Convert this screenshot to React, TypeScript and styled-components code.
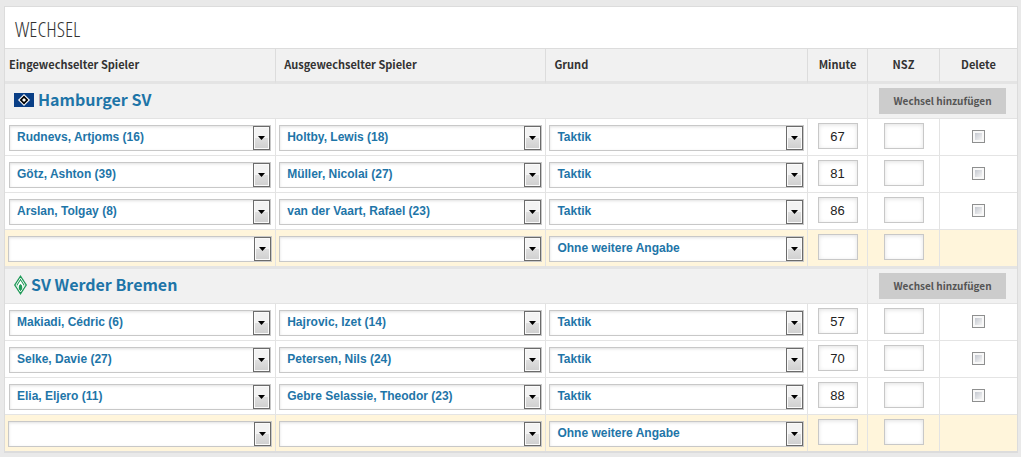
import React from "react";
import styled, { createGlobalStyle } from "styled-components";

const GlobalStyle = createGlobalStyle`
  *, *::before, *::after { box-sizing: border-box; }
  body {
    margin: 0;
    background: #e9e9e9;
    color: #333;
    font-family: "Noto Sans CJK JP", "Noto Sans", sans-serif;
    font-size: 11px;
  }
`;

const Panel = styled.section`
  margin: 6px 3px 4px 4px;
  background: #fff;
  border: 1px solid #dcdcdc;
  border-bottom-width: 2px;
`;

const Title = styled.h2`
  margin: 0;
  padding: 2px 10px 0;
  height: 42px;
  line-height: 40px;
  border-bottom: 1px solid #dcdcdc;
  font-family: "Open Sans Condensed Light", "Open Sans Condensed", "Open Sans", sans-serif;
  font-weight: 300;
  font-size: 21px;
  text-transform: uppercase;
`;

const Table = styled.table`
  width: 100%;
  table-layout: fixed;
  border-collapse: separate;
  border-spacing: 0;
`;

const Col = styled.col<{ $width?: string }>`
  width: ${(p) => p.$width ?? "auto"};
`;

const HeadCell = styled.th<{ $inset?: number; $center?: boolean }>`
  height: 35px;
  padding: 0 4px 2px ${(p) => p.$inset ?? 4}px;
  background: #f1f1f1;
  border-right: 1px solid #dcdcdc;
  border-bottom: 3px solid #e4e4e4;
  font-weight: 700;
  line-height: 16px;
  text-align: ${(p) => (p.$center ? "center" : "left")};
  &:last-child { border-right: 0; }
`;

const TeamCell = styled.th`
  height: 35px;
  padding: 0 9px 2px;
  background: #f1f1f1;
  border-right: 1px solid #e3e3e3;
  border-bottom: 1px solid #e3e3e3;
  text-align: left;
`;

const ActionCell = styled.td`
  padding: 0 11px;
  background: #f1f1f1;
  border-bottom: 1px solid #e3e3e3;
`;

const TeamLink = styled.a`
  display: flex;
  align-items: center;
  gap: 4px;
  color: #1e75a8;
  font-size: 16px;
  font-weight: 700;
  line-height: 22px;
  text-decoration: none;
`;

const TeamName = styled.span`
  padding-bottom: 2px;
`;

const AddButton = styled.button`
  display: block;
  width: 100%;
  height: 26px;
  padding: 0 0 2px;
  border: 0;
  background: #ccc;
  color: #555;
  font: 700 10px "Noto Sans CJK JP", "Noto Sans", sans-serif;
`;

const Row = styled.tr<{ $fresh?: boolean }>`
  background: ${(p) => (p.$fresh ? "#fff5db" : "#fff")};
`;

const Cell = styled.td<{ $kind: "select" | "input" | "check"; $wide?: boolean; $thick?: boolean; $last?: boolean }>`
  height: ${(p) => (p.$thick ? 39 : p.$last ? 36 : 37)}px;
  padding: ${(p) =>
    p.$kind === "select" ? (p.$wide ? "6px 4px 4px" : "6px 3px 4px") : p.$kind === "input" ? "4px 0 0" : "11px 0 0"};
  border-right: 1px solid #e3e3e3;
  border-bottom: ${(p) => (p.$last ? 0 : p.$thick ? 3 : 1)}px solid #e4e4e4;
  text-align: center;
  vertical-align: top;
  &:last-child { border-right: 0; }
`;

const SelectBox = styled.span`
  display: grid;
  grid-template: 26px / 1fr;
`;

const Select = styled.select`
  grid-area: 1 / 1;
  appearance: none;
  width: 100%;
  margin: 0;
  padding: 0 20px 2px 7px;
  border: 1px solid #c8c8c8;
  border-radius: 0;
  background: #fff;
  box-shadow: inset 0 1px 3px rgba(0, 0, 0, 0.12);
  color: #1e75a8;
  font: 700 12px "Liberation Sans", Arial, sans-serif;
`;

const Arrow = styled.span`
  grid-area: 1 / 1;
  justify-self: end;
  display: flex;
  align-items: center;
  justify-content: center;
  width: 17px;
  height: 24px;
  margin: 1px;
  border: 1px solid #6b6b6b;
  background: linear-gradient(#f3f3f3 0 50%, #dfdfdf 50%, #cfcfcf);
  box-shadow: inset 0 0 0 1px #fafafa;
  pointer-events: none;
`;

const NumberInput = styled.input`
  display: block;
  width: 40px;
  height: 26px;
  margin: 0 auto;
  padding: 0;
  border: 1px solid #c8c8c8;
  background: #fff;
  box-shadow: inset 0 1px 4px rgba(0, 0, 0, 0.12);
  color: #222;
  font: 13px "Liberation Sans", Arial, sans-serif;
  text-align: center;
`;

const Checkbox = styled.input`
  appearance: none;
  display: block;
  width: 13px;
  height: 13px;
  margin: 0 auto;
  border: 1px solid #8e8f8f;
  background: linear-gradient(135deg, #c4c8d0, #f4f4f4) content-box, #f8f8f8;
  padding: 2px;
  &:checked { background: #1e75a8 content-box; }
`;

const HamburgLogo = () => (
  <svg width="20" height="14" viewBox="0 0 20 14" aria-hidden="true">
    <path fill="#0a3f86" d="M0 0h20v14H0z" />
    <path fill="#fff" d="M10 1l6 6-6 6-6-6z" />
    <path fill="#000" d="M10 2.600l4.400 4.400-4.400 4.400-4.400-4.400z" />
    <path fill="#fff" d="M10 5l2 2-2 2-2-2z" />
  </svg>
);

const BremenLogo = () => (
  <svg width="13" height="20" viewBox="0 0 13 20" aria-hidden="true">
    <path fill="#1f9a58" d="M6.500 0L13 10 6.500 20 0 10z" />
    <path fill="none" stroke="#f1f7f3" strokeWidth="1" d="M6.500 3L11 10 6.500 17 2 10z" />
    <path fill="#fff" d="M6.500 5.500L10 11l-1.500 3L8 10.500 6.500 9 5 10.500 4.500 14 3 11z" />
    <path fill="#1f9a58" d="M6.500 10.500l1 1.500v3h-2v-3z" />
  </svg>
);

type Sub = { on: string; off: string; reason: string; minute: string };
type Team = { name: string; logo: React.ReactNode; subs: Sub[] };

const teams: Team[] = [
  {
    name: "Hamburger SV",
    logo: <HamburgLogo />,
    subs: [
      { on: "Rudnevs, Artjoms (16)", off: "Holtby, Lewis (18)", reason: "Taktik", minute: "67" },
      { on: "Götz, Ashton (39)", off: "Müller, Nicolai (27)", reason: "Taktik", minute: "81" },
      { on: "Arslan, Tolgay (8)", off: "van der Vaart, Rafael (23)", reason: "Taktik", minute: "86" },
      { on: "", off: "", reason: "Ohne weitere Angabe", minute: "" },
    ],
  },
  {
    name: "SV Werder Bremen",
    logo: <BremenLogo />,
    subs: [
      { on: "Makiadi, Cédric (6)", off: "Hajrovic, Izet (14)", reason: "Taktik", minute: "57" },
      { on: "Selke, Davie (27)", off: "Petersen, Nils (24)", reason: "Taktik", minute: "70" },
      { on: "Elia, Eljero (11)", off: "Gebre Selassie, Theodor (23)", reason: "Taktik", minute: "88" },
      { on: "", off: "", reason: "Ohne weitere Angabe", minute: "" },
    ],
  },
];

const Dropdown = ({ label, value }: { label: string; value: string }) => (
  <SelectBox>
    <Select aria-label={label} defaultValue={value}>
      <option value={value}>{value}</option>
    </Select>
    <Arrow>
      <svg width="7" height="4" viewBox="0 0 7 4" aria-hidden="true">
        <path d="M0 0h7L3.500 4z" />
      </svg>
    </Arrow>
  </SelectBox>
);

const SubRow = ({ sub, closes, last }: { sub: Sub; closes: boolean; last: boolean }) => {
  const fresh = sub.on === "";
  const edge = { $thick: closes && !last, $last: last };
  return (
    <Row $fresh={fresh}>
      <Cell $kind="select" $wide={!fresh} {...edge}><Dropdown label="Eingewechselter Spieler" value={sub.on} /></Cell>
      <Cell $kind="select" {...edge}><Dropdown label="Ausgewechselter Spieler" value={sub.off} /></Cell>
      <Cell $kind="select" {...edge}><Dropdown label="Grund" value={sub.reason} /></Cell>
      <Cell $kind="input" {...edge}><NumberInput aria-label="Minute" defaultValue={sub.minute} /></Cell>
      <Cell $kind="input" {...edge}><NumberInput aria-label="NSZ" /></Cell>
      <Cell $kind="check" {...edge}>{!fresh && <Checkbox type="checkbox" aria-label="Delete" />}</Cell>
    </Row>
  );
};

export default function App() {
  return (
    <>
      <GlobalStyle />
      <Panel>
        <Title>Wechsel</Title>
        <Table>
          <colgroup>
            <Col $width="26.8%" />
            <Col $width="26.7%" />
            <Col />
            <Col $width="60px" />
            <Col $width="72px" />
            <Col $width="77px" />
          </colgroup>
          <thead>
            <tr>
              <HeadCell>Eingewechselter Spieler</HeadCell>
              <HeadCell $inset={8}>Ausgewechselter Spieler</HeadCell>
              <HeadCell $inset={8}>Grund</HeadCell>
              <HeadCell $center>Minute</HeadCell>
              <HeadCell $center>NSZ</HeadCell>
              <HeadCell $center>Delete</HeadCell>
            </tr>
          </thead>
          {teams.map((team, t) => (
            <tbody key={team.name}>
              <tr>
                <TeamCell colSpan={4} scope="rowgroup">
                  <TeamLink href="#">{team.logo}<TeamName>{team.name}</TeamName></TeamLink>
                </TeamCell>
                <ActionCell colSpan={2}>
                  <AddButton type="button">Wechsel hinzufügen</AddButton>
                </ActionCell>
              </tr>
              {team.subs.map((sub, i) => (
                <SubRow
                  key={i}
                  sub={sub}
                  closes={i === team.subs.length - 1}
                  last={t === teams.length - 1 && i === team.subs.length - 1}
                />
              ))}
            </tbody>
          ))}
        </Table>
      </Panel>
    </>
  );
}
